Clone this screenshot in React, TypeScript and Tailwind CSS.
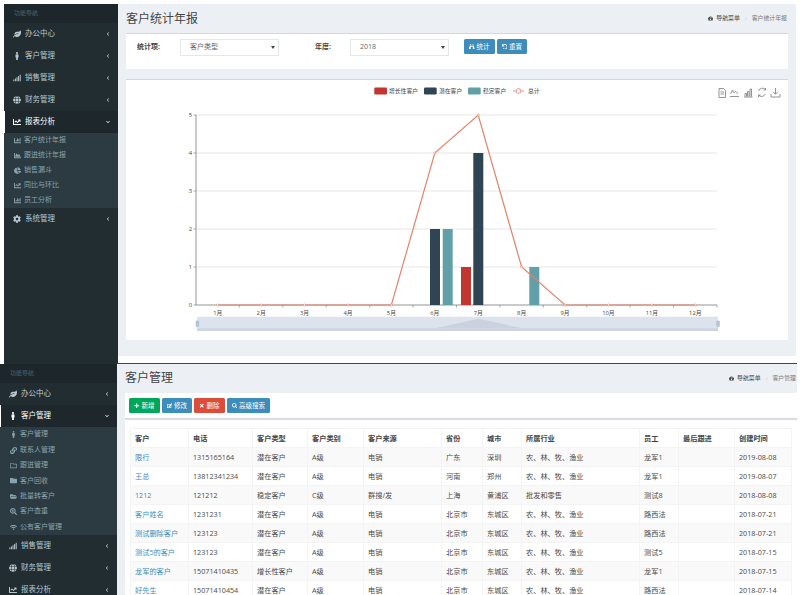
import type { ReactNode } from "react"
import {
  FaBinoculars,
  FaChartArea,
  FaChartBar,
  FaChartLine,
  FaChartPie,
  FaChevronDown,
  FaChevronLeft,
  FaCog,
  FaEdit,
  FaFolder,
  FaFolderOpen,
  FaGlobe,
  FaLeaf,
  FaLink,
  FaMale,
  FaPlus,
  FaRegFolder,
  FaSearch,
  FaSearchPlus,
  FaSignal,
  FaTachometerAlt,
  FaTimes,
  FaUndo,
  FaWifi,
} from "react-icons/fa"

type MenuItem = { icon: ReactNode; label: string; open?: boolean; sub?: { icon: ReactNode; label: string }[] }

const reportSub = [
  { icon: <FaChartBar />, label: "客户统计年报" },
  { icon: <FaChartArea />, label: "跟进统计年报" },
  { icon: <FaChartPie />, label: "销售漏斗" },
  { icon: <FaChartLine />, label: "同比与环比" },
  { icon: <FaChartBar />, label: "员工分析" },
]

const customerSub = [
  { icon: <FaMale />, label: "客户管理" },
  { icon: <FaLink />, label: "联系人管理" },
  { icon: <FaRegFolder />, label: "跟进管理" },
  { icon: <FaFolder />, label: "客户回收" },
  { icon: <FaFolderOpen />, label: "批量转客户" },
  { icon: <FaSearchPlus />, label: "客户查重" },
  { icon: <FaWifi />, label: "公有客户管理" },
]

const topMenu: MenuItem[] = [
  { icon: <FaLeaf />, label: "办公中心" },
  { icon: <FaMale />, label: "客户管理" },
  { icon: <FaSignal />, label: "销售管理" },
  { icon: <FaGlobe />, label: "财务管理" },
  { icon: <FaChartLine />, label: "报表分析", open: true, sub: reportSub },
  { icon: <FaCog />, label: "系统管理" },
]

const bottomMenu: MenuItem[] = [
  { icon: <FaLeaf />, label: "办公中心" },
  { icon: <FaMale />, label: "客户管理", open: true, sub: customerSub },
  { icon: <FaSignal />, label: "销售管理" },
  { icon: <FaGlobe />, label: "财务管理" },
  { icon: <FaChartLine />, label: "报表分析" },
]

const columns = [
  { label: "客户", width: "w-[58px]" },
  { label: "电话", width: "w-[64px]" },
  { label: "客户类型", width: "w-[55px]" },
  { label: "客户类别", width: "w-[56px]" },
  { label: "客户来源", width: "w-[78px]" },
  { label: "省份", width: "w-[41px]" },
  { label: "城市", width: "w-[39px]" },
  { label: "所属行业", width: "w-[118px]" },
  { label: "员工", width: "w-[39px]" },
  { label: "最后跟进", width: "w-[56px]" },
  { label: "创建时间", width: "w-[57px]" },
]

const farming = "农、林、牧、渔业"

const rows = [
  ["限行", "1315165164", "潜在客户", "A级", "电销", "广东", "深圳", farming, "龙军1", "", "2019-08-08"],
  ["王总", "13812341234", "潜在客户", "A级", "电销", "河南", "郑州", farming, "龙军1", "", "2019-08-07"],
  ["1212", "121212", "稳定客户", "C级", "群搜/发", "上海", "黄浦区", "批发和零售", "测试8", "", "2018-08-08"],
  ["客户姓名", "1231231", "潜在客户", "A级", "电销", "北京市", "东城区", farming, "路西法", "", "2018-07-21"],
  ["测试删除客户", "123123", "潜在客户", "A级", "电销", "北京市", "东城区", farming, "路西法", "", "2018-07-21"],
  ["测试5的客户", "123123", "潜在客户", "A级", "电销", "北京市", "东城区", farming, "测试5", "", "2018-07-15"],
  ["龙军的客户", "15071410435", "增长性客户", "A级", "电销", "北京市", "东城区", farming, "龙军1", "", "2018-07-15"],
  ["好先生", "15071410454", "潜在客户", "A级", "电销", "北京市", "东城区", farming, "路西法", "", "2018-07-14"],
]

function Sidebar({ items, className, subRow }: { items: MenuItem[]; className: string; subRow: string }) {
  return (
    <aside className={`flex shrink-0 flex-col overflow-hidden bg-[#222d32] ${className}`}>
      <div className="flex h-[19px] shrink-0 items-center bg-[#1c262b] pl-[10px] text-[6px] text-[#4b646f]">功能导航</div>
      {items.map((item) => (
        <div key={item.label} className="shrink-0">
          <div
            className={`flex h-[22px] items-center border-l-[1.5px] pr-[8px] pl-[5px] text-[7.5px] ${
              item.open ? "border-white bg-[#1e282c] text-white" : "border-transparent text-[#b8c7ce]"
            }`}
          >
            <span className="flex w-[13px] justify-center text-[8px]">{item.icon}</span>
            <span className="ml-[2px] flex-1">{item.label}</span>
            {item.open ? <FaChevronDown className="text-[4px]" /> : <FaChevronLeft className="text-[4px]" />}
          </div>
          {item.sub && (
            <div className="bg-[#2c3b41]">
              {item.sub.map((s) => (
                <div key={s.label} className={`flex items-center pl-[9px] text-[7px] text-[#8aa4af] ${subRow}`}>
                  <span className="flex w-[9px] justify-center text-[7px]">{s.icon}</span>
                  <span className="ml-[2px]">{s.label}</span>
                </div>
              ))}
            </div>
          )}
        </div>
      ))}
    </aside>
  )
}

function PageHeader({ title, className }: { title: string; className: string }) {
  return (
    <div className={`flex items-center justify-between ${className}`}>
      <h1 className="text-[12px] font-normal text-[#444]">{title}</h1>
      <div className="flex items-center gap-[2px] text-[5.9px]">
        <FaTachometerAlt className="text-[5px] text-[#444]" />
        <span className="ml-[1px] text-[#444]">导航菜单</span>
        <span className="mx-[3px] text-[#bbb]">›</span>
        <span className="text-[#777]">{title}</span>
      </div>
    </div>
  )
}

function Button({ icon, label, color }: { icon: ReactNode; label: string; color: string }) {
  return (
    <button className={`flex h-[15px] items-center gap-[2px] rounded-[1.5px] px-[5px] text-[6.5px] text-white ${color}`}>
      <span className="text-[5.5px]">{icon}</span>
      {label}
    </button>
  )
}

function Select({ value }: { value: string }) {
  return (
    <div className="flex h-[17px] w-[99px] items-center justify-between border border-[#e4e7ec] pr-[3px] pl-[9px] text-[7px] text-[#666]">
      {value}
      <span className="h-0 w-0 border-x-[2px] border-t-[3px] border-x-transparent border-t-[#444]" />
    </div>
  )
}

function YearChart() {
  const months = ["1月", "2月", "3月", "4月", "5月", "6月", "7月", "8月", "9月", "10月", "11月", "12月"]
  const totals = [0, 0, 0, 0, 0, 4, 5, 1, 0, 0, 0, 0]
  const step = 521 / 12
  const cx = (i: number) => 196 + step * (i + 0.5)
  const cy = (v: number) => 305 - v * 38
  const line = totals.map((v, i) => `${cx(i)},${cy(v)}`).join(" ")
  const bars = [
    { x: 430, v: 2, fill: "#2f4554" },
    { x: 442.7, v: 2, fill: "#61a0a8" },
    { x: 461, v: 1, fill: "#c23531" },
    { x: 473.3, v: 4, fill: "#2f4554" },
    { x: 529.3, v: 1, fill: "#61a0a8" },
  ]
  const label = { fontSize: 5.8, fill: "#444" }

  return (
    <svg viewBox="126 80 662 260" className="block h-[260px] w-[662px]" fontFamily="'Open Sans','Noto Sans CJK SC',sans-serif">
      {/* legend */}
      <rect x="374.3" y="87.6" width="12.7" height="6.8" rx="1.2" fill="#c23531" />
      <text x="389" y="93" {...label}>增长性客户</text>
      <rect x="424" y="87.6" width="12.7" height="6.8" rx="1.2" fill="#2f4554" />
      <text x="439" y="93" {...label}>潜在客户</text>
      <rect x="468" y="87.6" width="12.7" height="6.8" rx="1.2" fill="#61a0a8" />
      <text x="483" y="93" {...label}>稳定客户</text>
      <line x1="513" x2="524" y1="91" y2="91" stroke="#e5826a" strokeWidth="0.8" />
      <circle cx="518.5" cy="91" r="2.4" fill="#fff" stroke="#e5826a" strokeWidth="0.8" />
      <text x="528" y="93" {...label}>总计</text>

      {/* toolbox */}
      <g fill="none" stroke="#888" strokeWidth="0.9">
        <path d="M719 88.5h4.5l2 2v7h-6.5z M720.5 92h3.5 M720.5 94h3.5" />
        <path d="M730 96.5h9 M730.5 94l2-4 1.5 3 1.5-1.5 2.5 2" />
        <path d="M744 97h8.5 M745 96.5v-3h1.5v3 M747.5 96.5v-5h1.5v5 M750 96.5v-7.5h1.5v7.5" />
        <path d="M765.5 89.5a4 4 0 0 0-6.8 1.5 M758.5 95a4 4 0 0 0 6.8-1 M765.5 88v2h-2 M758.5 97v-2h2" />
        <path d="M775.5 88v6 M773 91.8l2.5 2.5 2.5-2.5 M771 94v3h9v-3" />
      </g>

      {/* grid */}
      {[1, 2, 3, 4, 5].map((v) => (
        <line key={v} x1="196" x2="717" y1={cy(v)} y2={cy(v)} stroke="#e0e0e0" strokeWidth="0.8" />
      ))}
      {[0, 1, 2, 3, 4, 5].map((v) => (
        <g key={v}>
          <line x1="193.5" x2="196" y1={cy(v)} y2={cy(v)} stroke="#777" strokeWidth="0.6" />
          <text x="192" y={cy(v) + 2} textAnchor="end" {...label}>{v}</text>
        </g>
      ))}
      <line x1="196" x2="196" y1="115" y2="305" stroke="#888" strokeWidth="0.9" />
      <line x1="196" x2="717" y1="305" y2="305" stroke="#888" strokeWidth="0.9" />
      {months.map((m, i) => (
        <g key={m}>
          <line x1={196 + step * (i + 1)} x2={196 + step * (i + 1)} y1="305" y2="307.5" stroke="#777" strokeWidth="0.6" />
          <text x={cx(i)} y="314.5" textAnchor="middle" {...label}>{m}</text>
        </g>
      ))}

      {/* series */}
      {bars.map((b) => (
        <rect key={b.x} x={b.x} y={cy(b.v)} width="10" height={b.v * 38} fill={b.fill} />
      ))}
      <polyline points={line} fill="none" stroke="#e5826a" strokeWidth="1.2" />
      {totals.map((v, i) => (
        <circle key={i} cx={cx(i)} cy={cy(v)} r="1.1" fill="#fff" stroke="#e5826a" strokeWidth="0.6" />
      ))}

      {/* data zoom */}
      <rect x="197" y="316.7" width="521" height="14.3" fill="#dde3ed" />
      <rect x="197" y="328.3" width="521" height="2.7" fill="#ced5e2" />
      <polygon points="435,328.3 479,318.7 522,328.3" fill="#ccd2dd" />
      <rect x="196" y="321" width="2.6" height="5.5" rx="0.5" fill="#b9c6dd" stroke="#8fa3c4" strokeWidth="0.4" />
      <rect x="716.8" y="321" width="2.6" height="5.5" rx="0.5" fill="#b9c6dd" stroke="#8fa3c4" strokeWidth="0.4" />
    </svg>
  )
}

export default function App() {
  return (
    <div
      className="flex h-[595px] w-[800px] flex-col overflow-hidden bg-white"
      style={{ fontFamily: "'Open Sans','Noto Sans CJK SC',sans-serif" }}
    >
      {/* 客户统计年报 */}
      <section className="flex h-[364px] shrink-0 pt-[4px] pl-[4px]">
        <Sidebar items={topMenu} subRow="h-[15px]" className="h-full w-[114px]" />
        <main className="mb-[8px] flex w-[678px] flex-col bg-[#ecf0f5] pl-[8px]">
          <PageHeader title="客户统计年报" className="h-[29px] pr-[9px]" />
          <div className="flex h-[36px] w-[662px] items-start border-t border-[#d2d6de] bg-white pt-[5px] pl-[11px]">
            <span className="w-[43px] pt-[3px] text-[7px] font-bold text-[#444]">统计项:</span>
            <Select value="客户类型" />
            <span className="ml-[36px] w-[35px] pt-[3px] text-[7px] font-bold text-[#444]">年度:</span>
            <Select value="2018" />
            <div className="ml-[15px] flex gap-[2px]">
              <Button icon={<FaBinoculars />} label="统计" color="bg-[#3c8dbc]" />
              <Button icon={<FaUndo />} label="重置" color="bg-[#3c8dbc]" />
            </div>
          </div>
          <div className="mt-[10px] w-[662px] border-t border-[#d2d6de] bg-white">
            <YearChart />
          </div>
        </main>
      </section>

      {/* 客户管理 */}
      <section className="flex min-h-0 flex-1">
        <Sidebar items={bottomMenu} subRow="h-[15.4px]" className="w-[117px]" />
        <main className="-mt-[1.5px] w-[680px] border-t-[1.5px] border-[#2c4a5a] bg-[#ecf0f5] pl-[8px]">
          <PageHeader title="客户管理" className="h-[29.5px] pr-[1px]" />
          <div className="flex h-[27px] gap-[2px] border-b-2 border-[#d9dde3] bg-white pt-[5px] pl-[4px]">
            <Button icon={<FaPlus />} label="新增" color="bg-[#00a65a]" />
            <Button icon={<FaEdit />} label="修改" color="bg-[#3c8dbc]" />
            <Button icon={<FaTimes />} label="删除" color="bg-[#dd4b39]" />
            <Button icon={<FaSearch />} label="高级搜索" color="bg-[#3c8dbc]" />
          </div>
          <div className="h-full bg-white pt-[8px] pl-[5px]">
            <table className="w-[661px] table-fixed border-collapse text-[7.2px] text-[#4a4a4a]">
              <thead>
                <tr className="h-[19px]">
                  {columns.map((c) => (
                    <th key={c.label} className={`${c.width} border border-[#f4f4f4] px-[4px] text-left font-bold text-[#444]`}>
                      {c.label}
                    </th>
                  ))}
                </tr>
              </thead>
              <tbody>
                {rows.map((row, i) => (
                  <tr key={row[0]} className={`h-[19px] ${i % 2 === 0 ? "bg-[#f9f9f9]" : "bg-white"}`}>
                    {row.map((cell, j) => (
                      <td
                        key={j}
                        className={`overflow-hidden border border-[#f4f4f4] px-[4px] whitespace-nowrap ${
                          j === 0 ? "text-[#3c8dbc]" : ""
                        }`}
                      >
                        {cell}
                      </td>
                    ))}
                  </tr>
                ))}
              </tbody>
            </table>
          </div>
        </main>
      </section>
    </div>
  )
}
